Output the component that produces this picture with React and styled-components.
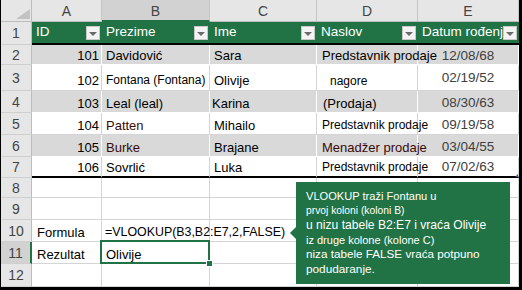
import React from 'react';
import styled, { createGlobalStyle } from 'styled-components';

const GREEN = '#217346';
const GRID = '#d4d4d4';
const BAND = '#d9d9d9';
const MAROON = '#3a0a0a';
const DATE = '#404040';

const GlobalStyle = createGlobalStyle`
  html, body {
    margin: 0;
    padding: 0;
    background: #fff;
  }
  body {
    font-family: "Liberation Sans", Arial, sans-serif;
  }
`;

const headers = ['ID', 'Prezime', 'Ime', 'Naslov', 'Datum rođenja'];

// one entry per data row: [id, prezime, ime, naslov, datum]
const tableRows = [
  {
    n: 2, h: 20, band: true,
    cells: [
      { t: '101', align: 'right' },
      { t: 'Davidović' },
      { t: 'Sara' },
      { t: 'Predstavnik prodaje', pad: 5 },
      { t: '12/08/68', align: 'center', color: DATE, size: 13.5 },
    ],
  },
  {
    n: 3, h: 26,
    cells: [
      { t: '102', align: 'right', bottom: 2 },
      { t: 'Fontana (Fontana)', size: 12, bottom: 2 },
      { t: 'Olivije', bottom: 2 },
      { t: 'nagore', size: 12, pad: 13, bottom: 1 },
      { t: '02/19/52', align: 'center', color: DATE, size: 13.5, bottom: 5 },
    ],
  },
  {
    n: 4, h: 22, band: true,
    cells: [
      { t: '103', align: 'right' },
      { t: 'Leal (leal)' },
      { t: 'Karina', pad: 2 },
      { t: '(Prodaja)', pad: 6 },
      { t: '08/30/63', align: 'center', color: DATE, size: 13.5, bottom: 2 },
    ],
  },
  {
    n: 5, h: 22,
    cells: [
      { t: '104', align: 'right' },
      { t: 'Patten', color: MAROON },
      { t: 'Mihailo' },
      { t: 'Predstavnik prodaje', size: 12, pad: 5 },
      { t: '09/19/58', align: 'center', color: DATE, size: 13.5, bottom: 2 },
    ],
  },
  {
    n: 6, h: 22, band: true,
    cells: [
      { t: '105', align: 'right' },
      { t: 'Burke', color: MAROON },
      { t: 'Brajane' },
      { t: 'Menadžer prodaje', pad: 5, color: MAROON },
      { t: '03/04/55', align: 'center', color: DATE, size: 13.5, bottom: 2 },
    ],
  },
  {
    n: 7, h: 21, thick: true,
    cells: [
      { t: '106', align: 'right' },
      { t: 'Sovrlić' },
      { t: 'Luka' },
      { t: 'Predstavnik prodaje', size: 12, pad: 5 },
      { t: '07/02/63', align: 'center', color: DATE, size: 13.5, bottom: 2, corner: true },
    ],
  },
];

const tailRows = [
  { n: 8, h: 20, cells: [] },
  { n: 9, h: 22, cells: [] },
  {
    n: 10, h: 22,
    cells: [
      { t: 'Formula', pad: 5 },
      { t: '=VLOOKUP(B3,B2:E7,2,FALSE)', size: 12.4, pad: 3 },
    ],
  },
  {
    n: 11, h: 22, selected: true,
    cells: [
      { t: 'Rezultat', pad: 5 },
      { t: 'Olivije', selected: true },
    ],
  },
  { n: 12, h: 23, cells: [] },
];

const calloutLines = [
  { t: 'VLOOKUP traži Fontanu u', size: 11.1 },
  { t: 'prvoj koloni (koloni B)', size: 10.3 },
  { t: 'u nizu tabele B2:E7 i vraća Olivije', size: 12.1 },
  { t: 'iz druge kolone (kolone C)', size: 11 },
  { t: 'niza tabele FALSE vraća potpuno', size: 11.7 },
  { t: 'podudaranje.', size: 11.8 },
];

function Filter() {
  return (
    <FilterButton>
      <Caret />
    </FilterButton>
  );
}

function DataCell({ cell, line, thick }) {
  const c = cell || {};
  return (
    <Cell
      $align={c.align}
      $size={c.size}
      $pad={c.pad}
      $bottom={c.bottom}
      $color={c.color}
      $line={line}
      $thick={thick}
      $selected={c.selected}
    >
      {c.t}
      {c.selected && <Handle />}
      {c.corner && <Corner />}
    </Cell>
  );
}

export default function App() {
  return (
    <>
      <GlobalStyle />
      <Sheet>
        <Row $h={22}>
          <CornerCell>
            <svg width="31" height="21" viewBox="0 0 31 21">
              <polygon points="15,19 29,19 29,9" fill="#c3c3c3" />
            </svg>
          </CornerCell>
          {['A', 'B', 'C', 'D', 'E'].map((l) => (
            <ColLetter key={l} $selected={l === 'B'}>
              {l}
            </ColLetter>
          ))}
        </Row>

        <Row $h={23} $bg={GREEN}>
          <RowNum>1</RowNum>
          {headers.map((h) => (
            <HeadCell key={h}>
              {h}
              <Filter />
            </HeadCell>
          ))}
        </Row>

        {tableRows.map((r) => (
          <Row key={r.n} $h={r.h} $bg={r.band ? BAND : '#fff'}>
            <RowNum>{r.n}</RowNum>
            {r.cells.map((c, i) => (
              <DataCell
                key={i}
                cell={c}
                line={r.band ? '#fff' : GRID}
                thick={r.thick}
              />
            ))}
          </Row>
        ))}

        {tailRows.map((r) => (
          <Row key={r.n} $h={r.h}>
            <RowNum $selected={r.selected}>{r.n}</RowNum>
            {[0, 1, 2, 3, 4].map((i) => (
              <DataCell key={i} cell={r.cells[i]} line={GRID} />
            ))}
          </Row>
        ))}

        <Callout>
          {calloutLines.map((l) => (
            <CalloutLine key={l.t} $size={l.size}>
              {l.t}
            </CalloutLine>
          ))}
        </Callout>
      </Sheet>
    </>
  );
}

const Sheet = styled.div`
  position: relative;
  width: 522px;
  height: 290px;
  box-sizing: border-box;
  border-left: 1px solid #000;
  border-right: 3px solid #000;
  border-bottom: 3px solid #000;
  overflow: hidden;
  background: #fff;
`;

const Row = styled.div`
  display: grid;
  grid-template-columns: 31px 70px 108px 107px 101px 101px;
  height: ${(p) => p.$h}px;
  background: ${(p) => p.$bg || '#fff'};
`;

const CornerCell = styled.div`
  background: #e6e6e6;
  border-right: 1px solid #bdbdbd;
  border-bottom: 1px solid #bdbdbd;
  box-sizing: border-box;
  svg {
    display: block;
  }
`;

const ColLetter = styled.div`
  display: flex;
  align-items: center;
  justify-content: center;
  box-sizing: border-box;
  background: ${(p) => (p.$selected ? '#d2d2d2' : '#e6e6e6')};
  border-right: 1px solid #c6c6c6;
  border-bottom: ${(p) => (p.$selected ? `2px solid ${GREEN}` : '1px solid #bdbdbd')};
  color: #444;
  font-family: "Liberation Sans", Arial, sans-serif;
  font-size: 14px;
  padding-top: 1px;
`;

const RowNum = styled.div`
  display: flex;
  align-items: center;
  justify-content: center;
  box-sizing: border-box;
  background: ${(p) => (p.$selected ? '#d2d2d2' : '#e6e6e6')};
  border-right: ${(p) => (p.$selected ? `2px solid ${GREEN}` : '1px solid #bdbdbd')};
  border-bottom: 1px solid #cfcfcf;
  color: #444;
  font-size: 14px;
`;

const HeadCell = styled.div`
  position: relative;
  display: flex;
  align-items: flex-end;
  box-sizing: border-box;
  padding: 0 0 3px 4px;
  border-bottom: 2px solid #000;
  color: #fff;
  font-size: 13.5px;
  line-height: 16px;
  white-space: nowrap;
`;

const FilterButton = styled.div`
  position: absolute;
  right: 2px;
  bottom: 3px;
  width: 14px;
  height: 14px;
  box-sizing: border-box;
  background: #f3f3f3;
  border: 1px solid #c9c9c9;
  display: flex;
  align-items: center;
  justify-content: center;
`;

const Caret = styled.span`
  width: 0;
  height: 0;
  border-left: 4px solid transparent;
  border-right: 4px solid transparent;
  border-top: 4px solid #6a6a6a;
  margin-top: 1px;
`;

const Cell = styled.div`
  position: relative;
  display: flex;
  align-items: flex-end;
  justify-content: ${(p) =>
    p.$align === 'right' ? 'flex-end' : p.$align === 'center' ? 'center' : 'flex-start'};
  box-sizing: border-box;
  padding: 0 ${(p) => (p.$align === 'right' ? 2 : 0)}px ${(p) => p.$bottom ?? 1}px
    ${(p) => (p.$align ? 0 : p.$pad ?? 4)}px;
  border-right: 1px solid ${(p) => p.$line};
  border-bottom: ${(p) => (p.$thick ? '2px solid #000' : `1px solid ${p.$line}`)};
  color: ${(p) => p.$color || '#000'};
  font-size: ${(p) => p.$size || 13}px;
  line-height: 15px;
  white-space: nowrap;

  ${(p) =>
    p.$selected &&
    `
    &::after {
      content: '';
      position: absolute;
      left: -2px;
      top: -2px;
      right: -1px;
      bottom: -1px;
      border: 2px solid ${GREEN};
      pointer-events: none;
    }
  `}
`;

const Handle = styled.span`
  position: absolute;
  right: -4px;
  bottom: -4px;
  width: 5px;
  height: 5px;
  background: ${GREEN};
  border: 1px solid #fff;
  z-index: 2;
`;

const Corner = styled.span`
  position: absolute;
  right: 0;
  bottom: -1px;
  width: 0;
  height: 0;
  border-left: 3px solid transparent;
  border-bottom: 3px solid #2f5597;
`;

const Callout = styled.div`
  position: absolute;
  left: 295px;
  top: 182px;
  width: 214px;
  height: 102px;
  box-sizing: border-box;
  padding: 7px 0 0 10px;
  background: ${GREEN};
  color: #fff;

  &::before {
    content: '';
    position: absolute;
    left: -6px;
    top: 45px;
    border-top: 6px solid transparent;
    border-bottom: 6px solid transparent;
    border-right: 6px solid ${GREEN};
  }
`;

const CalloutLine = styled.div`
  font-size: ${(p) => p.$size}px;
  line-height: 14.6px;
  white-space: nowrap;
`;
